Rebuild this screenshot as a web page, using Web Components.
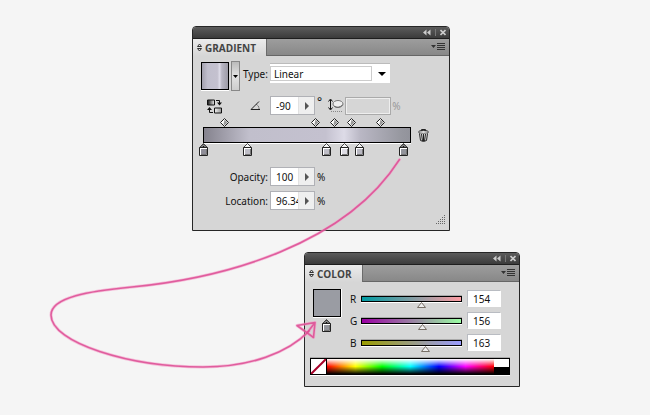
<!DOCTYPE html>
<html lang="en">
<head>
<meta charset="utf-8">
<title>Gradient and Color panels</title>
<style>
  body {
    margin: 0;
    background: #f5f5f5;
    color: #111;
    font: 10px/12px "Noto Sans", "Open Sans", sans-serif;
  }
</style>
</head>
<body>
<panel-desktop>
  <floating-panel heading="GRADIENT" style="left: 192px; top: 26px; width: 258px">
    <gradient-editor></gradient-editor>
  </floating-panel>
  <floating-panel heading="COLOR" style="left: 304px; top: 252px; width: 216px">
    <color-editor></color-editor>
  </floating-panel>
</panel-desktop>

<script>
class BaseElement extends HTMLElement {
  constructor() {
    super();
    this.attachShadow({ mode: "open" });
  }

  connectedCallback() {
    this.shadowRoot.innerHTML = /* html */`
      <style>
        *, *:before, *:after { box-sizing: border-box; }
        button, input, select {
          font: inherit;
          color: inherit;
          margin: 0;
          padding: 0;
          border: 0;
          border-radius: 0;
          background: none;
          outline: 0;
        }
        button { display: block; line-height: 0; }
        svg { display: block; }
        ${this.constructor.styles}
      </style>
      ${this.render()}
    `;
  }
}

class PanelDesktop extends BaseElement {
  static get styles() {
    return /* css */`
      :host {
        display: block;
        position: relative;
        min-height: 100vh;
        overflow: hidden;
      }

      .arrow {
        position: absolute;
        left: 0;
        top: 0;
        overflow: visible;
        pointer-events: none;
        fill: none;
        stroke-linecap: round;
        stroke-linejoin: round;
      }
    `;
  }

  render() {
    return /* html */`
      <slot></slot>
      <svg class="arrow" width="1" height="1" aria-hidden="true">
        <defs>
          <g id="curve">
            <path d="M399.500 159.500C345 245 225 278 132 287C90 291 51 297 51 315C51 343 130 367 203 367C250 367 288 353 309 331"/>
            <path d="M315 322.500L297 325.500L313.500 337.500ZL307 333"/>
          </g>
        </defs>
        <use href="#curve" stroke="#f59ac6" stroke-opacity=".6" stroke-width="3"/>
        <use href="#curve" stroke="#dc4c93" stroke-opacity=".85" stroke-width="1.600"/>
      </svg>
    `;
  }
}

class FloatingPanel extends BaseElement {
  static get styles() {
    return /* css */`
      :host {
        display: block;
        box-sizing: border-box;
        position: absolute;
        border: 1px solid #262626;
        border-radius: 4px 4px 0 0;
        background: #d6d6d6;
        overflow: hidden;
      }

      .titlebar {
        display: flex;
        align-items: center;
        justify-content: flex-end;
        gap: 4px;
        height: 12px;
        padding-right: 3px;
        background: linear-gradient(#5c5c5c, #3b3b3b);
        border-bottom: 1px solid #1e1e1e;
      }

      .titlebar i {
        width: 1px;
        height: 7px;
        background: #777;
      }

      .tabs {
        display: flex;
        justify-content: space-between;
        align-items: center;
        height: 17px;
        background: linear-gradient(#9d9d9d, #888);
        border-bottom: 1px solid #666;
      }

      h2 {
        display: flex;
        align-items: center;
        gap: 3px;
        height: 17px;
        margin: 0 0 -1px;
        padding: 0 10px 0 4px;
        color: #444;
        font: bold 10px/12px "Open Sans", "Noto Sans", sans-serif;
        background: linear-gradient(#ececec, #d6d6d6);
        border-right: 1px solid #6b6b6b;
      }

      .menu { padding-right: 4px; }
    `;
  }

  render() {
    return /* html */`
      <div class="titlebar">
        <button aria-label="Collapse">
          <svg width="8" height="7" fill="#ccc"><path d="M3.500 .5V6.500L0 3.500ZM7.500 .5V6.500L4 3.500Z"/></svg>
        </button>
        <i></i>
        <button aria-label="Close">
          <svg width="6" height="7" stroke="#ccc" stroke-width="1.600"><path d="M.5 1L5.500 6M5.500 1L.5 6"/></svg>
        </button>
      </div>
      <div class="tabs">
        <h2>
          <svg width="5" height="9" fill="none" stroke="#333"><path d="M.5 3.500L2.500 1L4.500 3.500ZM.5 5.500L2.500 8L4.500 5.500Z"/></svg>
          ${this.getAttribute("heading")}
        </h2>
        <button class="menu" aria-label="Panel menu">
          <svg width="14" height="8" fill="#333"><path d="M0 2H5L2.500 5ZM6 0H14V1H6ZM6 2H14V3H6ZM6 4H14V5H6ZM6 6H14V7H6Z"/></svg>
        </button>
      </div>
      <slot></slot>
    `;
  }
}

class StepField extends BaseElement {
  static get styles() {
    return /* css */`
      :host {
        display: grid;
        grid-template-columns: 77px auto auto;
        justify-content: start;
        align-items: center;
      }

      label {
        justify-self: end;
        padding-right: 2px;
      }

      .box {
        display: flex;
        width: 45px;
        height: 19px;
        background: #fff;
        border: 1px solid #b0b1b6;
      }

      input {
        width: 27px;
        padding-left: 5px;
      }

      button {
        flex: 1;
        display: grid;
        place-items: center;
        background: #efefef;
        border-left: 1px solid #e2e2e2;
      }

      .unit { padding-left: 2px; }
      :host([raised]) .unit { align-self: start; font-size: 12px; line-height: 12px; }
      :host([raised]) label { padding-right: 9px; }
    `;
  }

  render() {
    return /* html */`
      <label for="value"><slot></slot></label>
      <span class="box">
        <input id="value" value="${this.getAttribute("value")}">
        <button aria-label="Open slider"><svg width="4" height="8" fill="#555"><path d="M0 0L4 4L0 8Z"/></svg></button>
      </span>
      <span class="unit">${this.getAttribute("unit")}</span>
    `;
  }
}

class GradientStop extends BaseElement {
  static get styles() {
    return /* css */`
      :host { display: block; width: 9px; height: 13px; }
    `;
  }

  render() {
    const color = this.getAttribute("color");
    const tip = this.hasAttribute("selected") ? "#111" : "#eee";
    return /* html */`
      <button aria-label="Color stop">
        <svg width="9" height="13">
          <path d="M.5 4.500L4.500 .5L8.500 4.500Z" fill="${tip}" stroke="#444"/>
          <path d="M2 4H3V3H4V2H5V3H6V4H7" fill="none" stroke="#fff" stroke-width=".5"/>
          <path d="M.5 4.500H8.500V12.500H.5Z" fill="#fff" stroke="#222"/>
          <path d="M2 6H7.500V11.500H2Z" fill="${color}"/>
          <path d="M7.500 6V11.500H2" fill="none" stroke="#777"/>
        </svg>
      </button>
    `;
  }
}

class GradientRamp extends BaseElement {
  static get styles() {
    return /* css */`
      :host {
        display: block;
        position: relative;
        padding: 9px 0 14px;
      }

      .bar {
        height: 16px;
        border: 1px solid #000;
        box-shadow: 0 1px #fff;
        background: linear-gradient(90deg, #85838e, #c1bfcc 22%, #c4c1cf 59%, #dddbe7 68%, #b9b7c4 76%, #96979f 96%, #92939b);
      }

      .mid, gradient-stop {
        position: absolute;
        margin-left: -4px;
      }

      .mid { top: 0; }
      gradient-stop { top: 25px; }
    `;
  }

  render() {
    const stops = [
      [0, "#8f8e98"], [21, "#bebdc6"], [59, "#bebdc6"],
      [68, "#dedde5"], [75, "#b9b8c2"], [96, "#92949b"]
    ];
    const mids = [10, 54, 63, 71, 85];
    return /* html */`
      ${mids.map(at => /* html */`
        <button class="mid" style="left: ${at}%" aria-label="Midpoint">
          <svg width="9" height="9"><path d="M.5 4.500L4.500 .5L8.500 4.500L4.500 8.500Z" fill="#fff" stroke="#222"/><path d="M4.500 1.500L7.500 4.500L4.500 7.500L3.500 6Z" fill="#999"/></svg>
        </button>`).join("")}
      <div class="bar"></div>
      ${stops.map(([at, color]) => /* html */`
        <gradient-stop style="left: ${at}%" color="${color}" ${at === 96 || at === 0 ? "selected" : ""}></gradient-stop>`).join("")}
    `;
  }
}

class GradientEditor extends BaseElement {
  static get styles() {
    return /* css */`
      :host {
        display: block;
        position: relative;
        padding: 5px 0 20px;
      }

      .type {
        display: flex;
        align-items: flex-start;
        padding-left: 8px;
        height: 30px;
      }

      .swatch {
        width: 28px;
        height: 28px;
        margin: 1px 2px 0 0;
        border: 1px solid #000;
        box-shadow: 0 1px #fff;
        background: linear-gradient(90deg, #a3a1ae, #c1bfcd 22%, #c4c1cf 59%, #dddbe7 68%, #b9b7c4 76%, #9c9ba6);
      }

      .presets {
        display: grid;
        place-items: center;
        width: 9px;
        height: 30px;
        border: 1px solid #888;
        background: linear-gradient(#bbb, #e2e2e2 50%, #ccc);
      }

      .type label {
        margin: 7px 2px 0 3px;
      }

      .select {
        display: grid;
        grid-template-columns: 101px 19px;
        align-items: center;
        height: 19px;
        margin-top: 3px;
        background: #fff;
        box-shadow: 0 -1px #bbb;
      }

      .select svg {
        grid-area: 1 / 2;
        justify-self: end;
        margin-right: 4px;
        pointer-events: none;
      }

      select {
        grid-area: 1 / 1 / 2 / 3;
        appearance: none;
        height: 15px;
        padding-left: 3px;
        line-height: 12px;
        background: linear-gradient(#ccc, #ccc) 100px 0 / 1px 15px no-repeat;
        border: solid #ccc;
        border-width: 1px 0 1px 1px;
        border-image: linear-gradient(90deg, #ccc 101px, transparent 101px) 1;
      }

      .angle {
        display: flex;
        align-items: center;
        margin-top: 5px;
      }

      .reverse {
        margin: 2px -29px 0 14px;
      }

      .ratio {
        display: flex;
        align-items: center;
        gap: 1px;
        margin-left: 6px;
        color: #999;
      }

      .ratio input {
        width: 46px;
        height: 18px;
        border: 1px solid #aaa;
        box-shadow: inset 0 0 0 1px #eee;
      }

      .ramp {
        display: flex;
        align-items: center;
        gap: 7px;
        margin: 3px 20px 10px 10px;
      }

      gradient-ramp { flex: 1; }

      .trash { margin-bottom: 4px; }

      .location { margin-top: 5px; }

      .grip {
        position: absolute;
        right: 3px;
        bottom: 5px;
      }
    `;
  }

  render() {
    return /* html */`
      <div class="type">
        <button class="swatch" aria-label="Gradient fill"></button>
        <button class="presets" aria-label="Gradient presets"><svg width="5" height="3"><path d="M0 0H5L2.500 3Z"/></svg></button>
        <label for="type">Type:</label>
        <span class="select">
          <select id="type"><option>Linear</option><option>Radial</option></select>
          <svg width="8" height="4"><path d="M0 0H8L4 4Z"/></svg>
        </span>
      </div>
      <div class="angle">
        <button class="reverse" aria-label="Reverse gradient">
          <svg width="15" height="15">
            <defs>
              <linearGradient id="a"><stop stop-color="#111"/><stop offset="1" stop-color="#eee"/></linearGradient>
              <linearGradient id="b"><stop stop-color="#eee"/><stop offset="1" stop-color="#999"/></linearGradient>
            </defs>
            <path d="M.5 1H7.500V6H.5Z" fill="url(#a)" stroke="#111"/>
            <path d="M7.500 9H14.500V14H7.500Z" fill="url(#b)" stroke="#111"/>
            <path d="M9 1.500H12.500V5M6 13.500H2.500V10" fill="none" stroke="#111"/>
            <path d="M10 3.500H15L12.500 6.500ZM0 11H5L2.500 8Z" fill="#111"/>
          </svg>
        </button>
        <step-field value="-90" unit="&deg;" raised>
          <svg width="11" height="10" fill="none" stroke="#222" role="img" aria-label="Angle"><path d="M9 .5L1 8.500H10"/><path d="M6.500 3.500Q9 5 9 8" stroke-dasharray="1 1"/></svg>
        </step-field>
        <span class="ratio">
          <label for="ratio">
            <svg width="16" height="15" role="img" aria-label="Aspect ratio">
              <path d="M2.500 2V11M.5 3.500L2.500 1L4.500 3.500M.5 9.500L2.500 12L4.500 9.500" fill="none" stroke="#111"/>
              <ellipse cx="10" cy="6" rx="5" ry="3.500" fill="#eee" stroke="#777"/>
              <path d="M6 8Q10 11 14.500 7" fill="none" stroke="#666"/>
              <path d="M3 13.500H15" stroke="#888" stroke-dasharray="1 1"/>
            </svg>
          </label>
          <input id="ratio" disabled>
          <span>%</span>
        </span>
      </div>
      <div class="ramp">
        <gradient-ramp></gradient-ramp>
        <button class="trash" aria-label="Delete stop">
          <svg width="11" height="13" fill="none" stroke="#222">
            <path d="M3.500 2V.5H7.500V2" />
            <ellipse cx="5.500" cy="3" rx="5" ry="1.500" fill="#ddd"/>
            <path d="M1.500 4.500L2.500 11.500Q5.500 13.500 8.500 11.500L9.500 4.500" fill="#ddd"/>
            <path d="M3.500 5L4.500 12M5.500 5V12M7.500 5L6.500 12"/>
          </svg>
        </button>
      </div>
      <step-field value="100" unit="%">Opacity:</step-field>
      <step-field class="location" value="96.34" unit="%">Location:</step-field>
      <svg class="grip" width="10" height="10" fill="#666">
        <path d="M8 0h1v1h-1zM6 2h1v1h-1zM8 2h1v1h-1zM4 4h1v1h-1zM6 4h1v1h-1zM8 4h1v1h-1zM2 6h1v1h-1zM4 6h1v1h-1zM6 6h1v1h-1zM8 6h1v1h-1zM0 8h1v1h-1zM2 8h1v1h-1zM4 8h1v1h-1zM6 8h1v1h-1zM8 8h1v1h-1z"/>
      </svg>
    `;
  }
}

class ChannelSlider extends BaseElement {
  static get styles() {
    return /* css */`
      :host {
        display: grid;
        grid-template-columns: 7px 1fr 33px;
        align-items: center;
        height: 16px;
      }

      .track {
        grid-area: 1 / 2;
        height: 6px;
        margin: 0 6px 0 4px;
        border: 1px solid #000;
        box-shadow: 0 1px #fff, 0 -1px #aaa;
        background: linear-gradient(90deg, var(--from), var(--to));
      }

      /* the range lies over the track, wider by half a thumb at each end */
      input[type="range"] {
        grid-area: 1 / 2;
        appearance: none;
        height: 14px;
        min-width: 0;
        margin: 4px 2px 0 0;
      }

      input[type="range"]::-webkit-slider-thumb {
        appearance: none;
        width: 9px;
        height: 6px;
        margin-top: 8px;
        background: url('data:image/svg+xml,<svg xmlns="http://www.w3.org/2000/svg" width="9" height="6"><path d="M.5 5.500L4.500 .5L8.500 5.500Z" fill="%23eee" stroke="%23776f66"/></svg>');
      }

      .value {
        grid-area: 1 / 3;
        width: 33px;
        height: 16px;
        padding-left: 5px;
        background: #fff;
        box-shadow: -1px -1px #b9bcc2;
      }
    `;
  }

  render() {
    const name = this.getAttribute("name");
    const value = this.getAttribute("value");
    return /* html */`
      <label for="value">${name}</label>
      <div class="track"></div>
      <input type="range" min="0" max="255" value="${value}" aria-label="${name} slider">
      <input class="value" id="value" value="${value}">
    `;
  }
}

class ColorEditor extends BaseElement {
  static get styles() {
    return /* css */`
      :host {
        display: block;
        padding: 7px 8px 11px;
      }

      .mix {
        display: grid;
        grid-template-columns: 28px 1fr;
        gap: 9px;
        padding-right: 10px;
      }

      .swatch {
        width: 28px;
        height: 28px;
        border: 1px solid #000;
        box-shadow: 0 1px #fff, 1px 0 #fff;
        background: #9a9ca3;
      }

      gradient-stop { margin: 2px 0 0 9px; }

      .channels {
        display: grid;
        gap: 6px;
        padding-top: 1px;
      }

      .spectrum {
        display: flex;
        height: 17px;
        margin: 8px 1px 0 -3px;
        border: 1px solid #000;
        box-shadow: 0 1px #fff, 0 -1px #aaa;
      }

      .none {
        width: 16px;
        background: #fff;
        border-right: 1px solid #000;
      }

      .hues {
        flex: 1;
        background:
          linear-gradient(#fff, #fff0 50%, #0000 50%, #000),
          linear-gradient(90deg, #f00, #ff0 17%, #0f0 33%, #0ff 50%, #00f 67%, #f0f 83%, #f00);
      }

      .ends {
        width: 15px;
        background: linear-gradient(#fff 50%, #000 50%);
      }
    `;
  }

  render() {
    return /* html */`
      <div class="mix">
        <div>
          <button class="swatch" aria-label="Fill color"></button>
          <gradient-stop color="#92949b" selected></gradient-stop>
        </div>
        <div class="channels">
          <channel-slider name="R" value="154" style="--from: #009ca3; --to: #ff9ca3"></channel-slider>
          <channel-slider name="G" value="156" style="--from: #9a00a3; --to: #9affa3"></channel-slider>
          <channel-slider name="B" value="163" style="--from: #9a9c00; --to: #9a9cff"></channel-slider>
        </div>
      </div>
      <div class="spectrum">
        <button class="none" aria-label="None"><svg width="15" height="15"><path d="M0 15L15 0" stroke="#a8002a" stroke-width="2"/></svg></button>
        <div class="hues"></div>
        <div class="ends"></div>
      </div>
    `;
  }
}

customElements.define("panel-desktop", PanelDesktop);
customElements.define("floating-panel", FloatingPanel);
customElements.define("step-field", StepField);
customElements.define("gradient-stop", GradientStop);
customElements.define("gradient-ramp", GradientRamp);
customElements.define("gradient-editor", GradientEditor);
customElements.define("channel-slider", ChannelSlider);
customElements.define("color-editor", ColorEditor);
</script>
</body>
</html>
